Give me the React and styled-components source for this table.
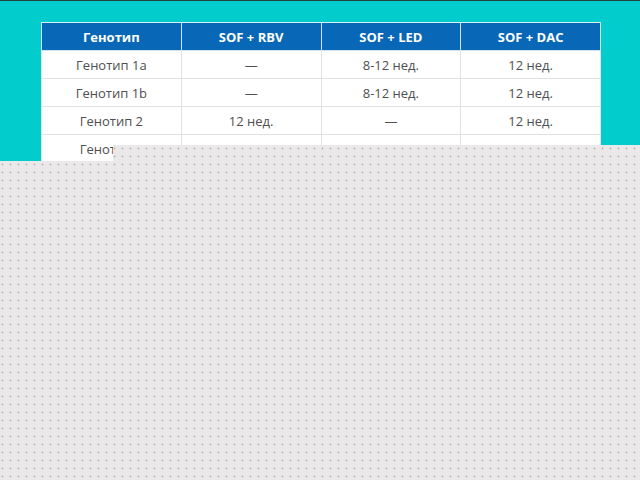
import React from "react";
import styled, { createGlobalStyle } from "styled-components";

const Global = createGlobalStyle`
  html, body { margin: 0; padding: 0; }
  body { font-family: "Open Sans", "Liberation Sans", sans-serif; background: #02cccc; }
`;

const Page = styled.div`
  position: relative;
  width: 640px;
  height: 480px;
  overflow: hidden;
  background: #02cccc;
  border-top: 1px solid #23403f;
  box-sizing: border-box;
  padding: 21px 0 0 41px;
`;

const Table = styled.table`
  width: 560px;
  border-collapse: collapse;
  border: 1px solid #d9eef3;
  background: #fff;
  font-size: 13px;
  table-layout: fixed;
`;

const Th = styled.th`
  height: 27px;
  padding: 0;
  background: #0867b6;
  color: #fff;
  font-weight: 700;
  text-align: center;
  border: 1px solid #cfe3f0;
  border-top-color: #d9eef3;
`;

const Td = styled.td`
  height: 27px;
  padding: 0;
  color: #4f4f4f;
  text-align: center;
  border: 1px solid #e2e2e2;
`;

const Curtain = styled.div`
  position: absolute;
  inset: 0;
  clip-path: polygon(113px 144px, 640px 144px, 640px 480px, 0 480px, 0 160px, 113px 160px);
  background:
    radial-gradient(circle at 2.5px 3.5px, #b4b4b4 0.7px, transparent 1.2px) 0 0 / 8px 8px,
    #eae8e8;
`;

const heads = ["Генотип", "SOF + RBV", "SOF + LED", "SOF + DAC"];
const rows = [
  ["Генотип 1a", "—", "8-12 нед.", "12 нед."],
  ["Генотип 1b", "—", "8-12 нед.", "12 нед."],
  ["Генотип 2", "12 нед.", "—", "12 нед."],
  ["Генотип 3", "24 нед.", "—", "12 нед."],
  ["Генотип 4", "—", "12 нед.", "—"],
];

export default function App() {
  return (
    <>
      <Global />
      <Page>
        <Table>
          <thead>
            <tr>{heads.map((h) => <Th key={h}>{h}</Th>)}</tr>
          </thead>
          <tbody>
            {rows.map((r, i) => (
              <tr key={i}>{r.map((c, j) => <Td key={j}>{c}</Td>)}</tr>
            ))}
          </tbody>
        </Table>
        <Curtain />
      </Page>
    </>
  );
}
